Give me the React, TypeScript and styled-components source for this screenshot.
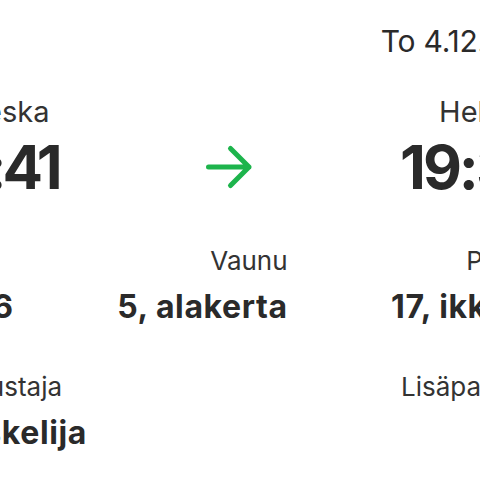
import React from "react";
import styled, { createGlobalStyle } from "styled-components";

const Global = createGlobalStyle`
  html, body {
    margin: 0;
    padding: 0;
    background: #ffffff;
    overflow: hidden;
  }
  body {
    font-family: Inter, "Noto Sans", "Liberation Sans", sans-serif;
    color: #2a2a2a;
  }
`;

const Ticket = styled.div`
  width: 619px;
  margin-left: -72px;
  padding-top: 23px;
  display: flex;
  flex-direction: column;
`;

const DateLine = styled.div`
  text-align: right;
  font-size: 30px;
  line-height: 36px;
  letter-spacing: -0.2px;
  color: #2a2a2a;
  margin-bottom: 35px;
  margin-right: -12px;
`;

const RouteRow = styled.div`
  display: flex;
  justify-content: space-between;
  align-items: flex-end;
  margin-bottom: 46px;
`;

const Stop = styled.div<{ $end?: boolean }>`
  display: flex;
  flex-direction: column;
  gap: 5px;
  text-align: ${(p) => (p.$end ? "right" : "left")};
`;

const Station = styled.div`
  font-size: 29px;
  line-height: 36px;
  color: #333333;
  white-space: nowrap;
`;

const Time = styled.div<{ $start?: boolean }>`
  font-size: 60px;
  line-height: 64px;
  font-weight: 700;
  letter-spacing: ${(p) => (p.$start ? "-4px" : "-3px")};
  color: #2a2a2a;
  white-space: nowrap;
`;

const ArrowSlot = styled.div`
  height: 64px;
  display: flex;
  align-items: center;
`;

const DetailRow = styled.div`
  display: flex;
  justify-content: space-between;
  margin-bottom: 44px;
`;

const Field = styled.div<{ $end?: boolean }>`
  display: flex;
  flex-direction: column;
  gap: 10px;
  text-align: ${(p) => (p.$end ? "right" : "left")};
`;

const Label = styled.div`
  font-size: 26px;
  line-height: 32px;
  color: #333333;
  white-space: nowrap;
`;

const Value = styled.div`
  font-size: 32px;
  line-height: 40px;
  font-weight: 700;
  letter-spacing: 0.6px;
  color: #2a2a2a;
  white-space: nowrap;
`;

const Arrow = () => (
  <svg width="50" height="46" viewBox="0 0 50 46" fill="none">
    <path
      d="M4.5 23H45M26.5 4.5L45 23L26.5 41.5"
      stroke="#1db44c"
      strokeWidth="5"
      strokeLinecap="round"
      strokeLinejoin="round"
    />
  </svg>
);

export default function App() {
  return (
    <>
      <Global />
      <Ticket>
        <DateLine>To 4.12.2025</DateLine>
        <RouteRow>
          <Stop>
            <Station>Ylivieska</Station>
            <Time $start>14:41</Time>
          </Stop>
          <ArrowSlot>
            <Arrow />
          </ArrowSlot>
          <Stop $end>
            <Station>Helsinki</Station>
            <Time>19:35</Time>
          </Stop>
        </RouteRow>
        <DetailRow>
          <Field>
            <Label>Juna</Label>
            <Value>IC 46</Value>
          </Field>
          <Field $end>
            <Label>Vaunu</Label>
            <Value>5, alakerta</Value>
          </Field>
          <Field $end>
            <Label>Paikka</Label>
            <Value>17, ikkuna</Value>
          </Field>
        </DetailRow>
        <DetailRow>
          <Field>
            <Label>Matkustaja</Label>
            <Value>Opiskelija</Value>
          </Field>
          <Field $end>
            <Label>Lisäpalvelut</Label>
            <Value>Ei</Value>
          </Field>
        </DetailRow>
      </Ticket>
    </>
  );
}
